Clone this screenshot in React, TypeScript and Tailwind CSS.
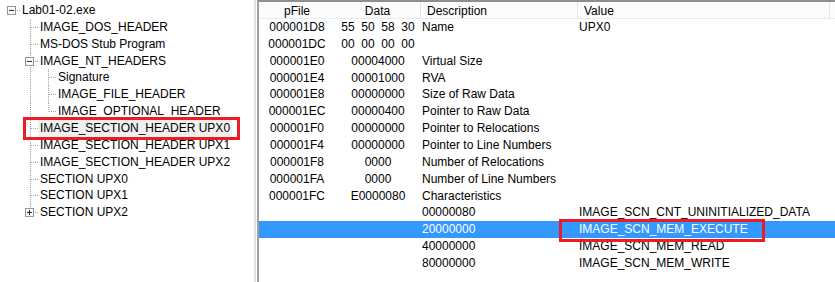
import type { ReactNode } from "react";

type Cell = "blank" | "pipe" | "tee" | "end" | "root";

type TreeRow = {
  label: string;
  cells: Cell[];
  box?: "minus" | "plus";
  selected?: boolean;
};

const tree: TreeRow[] = [
  { label: "Lab01-02.exe", cells: ["root"], box: "minus" },
  { label: "IMAGE_DOS_HEADER", cells: ["blank", "tee"] },
  { label: "MS-DOS Stub Program", cells: ["blank", "tee"] },
  { label: "IMAGE_NT_HEADERS", cells: ["blank", "tee"], box: "minus" },
  { label: "Signature", cells: ["blank", "pipe", "tee"] },
  { label: "IMAGE_FILE_HEADER", cells: ["blank", "pipe", "tee"] },
  { label: "IMAGE_OPTIONAL_HEADER", cells: ["blank", "pipe", "end"] },
  { label: "IMAGE_SECTION_HEADER UPX0", cells: ["blank", "tee"], selected: true },
  { label: "IMAGE_SECTION_HEADER UPX1", cells: ["blank", "tee"] },
  { label: "IMAGE_SECTION_HEADER UPX2", cells: ["blank", "tee"] },
  { label: "SECTION UPX0", cells: ["blank", "tee"] },
  { label: "SECTION UPX1", cells: ["blank", "tee"] },
  { label: "SECTION UPX2", cells: ["blank", "end"], box: "plus" },
];

type FieldRow = {
  offset: string;
  data: string;
  desc: string;
  value: string;
  selected?: boolean;
};

const fields: FieldRow[] = [
  { offset: "000001D8", data: "55  50  58  30", desc: "Name", value: "UPX0" },
  { offset: "000001DC", data: "00  00  00  00", desc: "", value: "" },
  { offset: "000001E0", data: "00004000", desc: "Virtual Size", value: "" },
  { offset: "000001E4", data: "00001000", desc: "RVA", value: "" },
  { offset: "000001E8", data: "00000000", desc: "Size of Raw Data", value: "" },
  { offset: "000001EC", data: "00000400", desc: "Pointer to Raw Data", value: "" },
  { offset: "000001F0", data: "00000000", desc: "Pointer to Relocations", value: "" },
  { offset: "000001F4", data: "00000000", desc: "Pointer to Line Numbers", value: "" },
  { offset: "000001F8", data: "0000", desc: "Number of Relocations", value: "" },
  { offset: "000001FA", data: "0000", desc: "Number of Line Numbers", value: "" },
  { offset: "000001FC", data: "E0000080", desc: "Characteristics", value: "" },
  { offset: "", data: "", desc: "00000080", value: "IMAGE_SCN_CNT_UNINITIALIZED_DATA" },
  { offset: "", data: "", desc: "20000000", value: "IMAGE_SCN_MEM_EXECUTE", selected: true },
  { offset: "", data: "", desc: "40000000", value: "IMAGE_SCN_MEM_READ" },
  { offset: "", data: "", desc: "80000000", value: "IMAGE_SCN_MEM_WRITE" },
];

// one 18px gutter slot of the tree: dotted guide lines plus the +/- box
function Guide({ kind, box }: { kind: Cell; box?: "minus" | "plus" }) {
  const dot = { stroke: "#a0a0a0", strokeWidth: 1, strokeDasharray: "1 1" };
  return (
    <svg
      width="18"
      height="17"
      viewBox="0 0 18 17"
      preserveAspectRatio="none"
      shapeRendering="crispEdges"
      className="block h-full shrink-0"
    >
      {(kind === "pipe" || kind === "tee") && <line x1="10.5" y1="0" x2="10.5" y2="17" {...dot} />}
      {kind === "end" && <line x1="10.5" y1="0" x2="10.5" y2="8.5" {...dot} />}
      {(kind === "tee" || kind === "end" || kind === "root") && (
        <line x1="11" y1="8.5" x2="18" y2="8.5" {...dot} />
      )}
      {box && (
        <g>
          <rect x="5.5" y="4.5" width="8" height="8" fill="#fff" stroke="#919191" />
          <line x1="7" y1="8.5" x2="12" y2="8.5" stroke="#1f1f1f" />
          {box === "plus" && <line x1="9.5" y1="6" x2="9.5" y2="11" stroke="#1f1f1f" />}
        </g>
      )}
    </svg>
  );
}

function HeadCell({ w, children, center, divider }: { w: string; children: ReactNode; center?: boolean; divider?: boolean }) {
  return (
    <div
      className={`${w} h-full shrink-0 leading-[14px] pt-[2px] whitespace-nowrap ${center ? "text-center" : "pl-[6px]"} ${
        divider ? "border-r border-r-[#e5e5e5]" : ""
      }`}
    >
      {children}
    </div>
  );
}

export default function App() {
  return (
    <div className="relative flex w-[835px] h-[282px] bg-white text-[12px] text-black font-['Liberation_Sans',Arial,sans-serif] overflow-hidden">
      {/* left: structure tree */}
      <div className="w-[256px] h-full shrink-0 border-r-2 border-r-[#e3e3e3] pt-[2px] pl-[2px]">
        {tree.map((row) => (
          <div key={row.label} className="flex h-[16.86px] items-stretch">
            {row.cells.map((c, i) => (
              <Guide key={i} kind={c} box={i === row.cells.length - 1 ? row.box : undefined} />
            ))}
            <span className={`px-[2px] leading-[16.86px] whitespace-nowrap ${row.selected ? "bg-[#f0f0f0]" : ""}`}>
              {row.label}
            </span>
          </div>
        ))}
      </div>

      <div className="w-[1px] shrink-0" />

      {/* right: field list */}
      <div className="flex-1 h-full border-l-2 border-l-[#a0a0a0] border-t-2 border-t-[#8f8f8f]">
        <div className="flex h-[17px] bg-[#fcfcfc] border-b border-b-[#e3ecf5]">
          <HeadCell w="w-[76px]" center>pFile</HeadCell>
          <HeadCell w="w-[86px]" center divider>Data</HeadCell>
          <HeadCell w="w-[157px]" divider>Description</HeadCell>
          <HeadCell w="w-[252px]" divider>Value</HeadCell>
        </div>
        {fields.map((f, i) => (
          <div
            key={i}
            className={`flex h-[16.86px] leading-[17.6px] whitespace-nowrap ${
              f.selected ? "bg-[#3399ff] text-white" : ""
            }`}
          >
            <div className="w-[76px] shrink-0 text-center">{f.offset}</div>
            <div className="w-[86px] shrink-0 text-center whitespace-pre">{f.data}</div>
            <div className="w-[157px] shrink-0 pl-[1px]">{f.desc}</div>
            <div className="w-[252px] shrink-0 pl-[1px]">{f.value}</div>
          </div>
        ))}
      </div>

      {/* red annotation boxes */}
      <div className="absolute left-[23px] top-[117px] w-[217px] h-[23px] border-[3px] border-[#ed1c24]" />
      <div className="absolute left-[559px] top-[219px] w-[206px] h-[23px] border-[3px] border-[#ed1c24]" />
    </div>
  );
}
